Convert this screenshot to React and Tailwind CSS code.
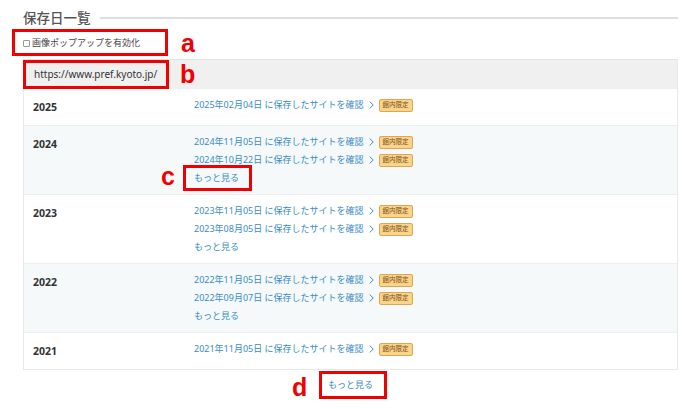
const jp = { fontFamily: '"Noto Sans", "Noto Sans CJK JP", sans-serif' };

const years = [
  { year: "2025", dates: ["2025年02月04日"], more: false },
  { year: "2024", dates: ["2024年11月05日", "2024年10月22日"], more: true },
  { year: "2023", dates: ["2023年11月05日", "2023年08月05日"], more: true },
  { year: "2022", dates: ["2022年11月05日", "2022年09月07日"], more: true },
  { year: "2021", dates: ["2021年11月05日"], more: false },
];

const Chevron = () => (
  <svg width="5" height="8" viewBox="0 0 5 8" className="mx-[5px] shrink-0">
    <path d="M0.8 0.6 L4.2 4 L0.8 7.4" fill="none" stroke="#3a8cc4" strokeWidth="1" />
  </svg>
);

const Badge = () => (
  <span className="inline-flex items-center h-[13px] px-[3px] rounded-[2px] border border-[#dea650] bg-[#fbd48c] text-[6.5px] leading-none text-[#7e5016]">
    館内限定
  </span>
);

// red annotation frame + letter lying over the page
const Mark = ({ box, letterPos, letter }) => (
  <>
    <div className={"absolute border-[3px] border-[#f00000] pointer-events-none " + box} />
    <span
      className={
        "absolute text-[25px] leading-[30px] font-bold text-[#f00000] font-['Liberation_Sans',sans-serif] " +
        letterPos
      }
    >
      {letter}
    </span>
  </>
);

export default function App() {
  return (
    <div className="relative w-[700px] h-[409px] bg-white overflow-hidden" style={jp}>
      <div className="pl-[23px] pr-[22px] pt-[8px]">
        <div className="flex items-center h-[20px]">
          <h2 className="text-[13.5px] font-medium text-[#555] leading-[20px]">保存日一覧</h2>
          <div className="flex-1 ml-[9px] h-[2px] bg-[#dedede]" />
        </div>

        <label className="flex items-center h-[14px] mt-[8px] text-[9px] text-[#444]">
          <span className="w-[7px] h-[7px] border border-[#999] rounded-[1px] mr-[2px]" />
          画像ポップアップを有効化
        </label>

        <div className="mt-[9px] border border-[#e8e8e8] border-t-0">
          <div className="h-[29px] flex items-center pl-[10px] bg-[#f0f0f0] border-t border-[#e4e4e4] text-[10px] text-[#333]">
            https://www.pref.kyoto.jp/
          </div>
          {years.map((y, i) => (
            <div
              key={y.year}
              className={
                "flex border-t border-[#eceff0] py-[7px] " +
                (i % 2 === 1 ? "bg-[#f5f9fa]" : "bg-white")
              }
            >
              <div className="w-[170px] shrink-0 pl-[9px] text-[10.5px] font-bold text-[#333] leading-[22px]">
                {y.year}
              </div>
              <div className="flex flex-col text-[9px] text-[#3a8cc4] leading-[18px]">
                {y.dates.map((d) => (
                  <div key={d} className="flex items-center h-[18px]">
                    <span>{d} に保存したサイトを確認</span>
                    <Chevron />
                    <Badge />
                  </div>
                ))}
                {y.more && <div className="h-[18px]">もっと見る</div>}
              </div>
            </div>
          ))}
        </div>

        <div className="flex justify-center mt-[6px] text-[9px] text-[#3a8cc4] leading-[18px]">
          もっと見る
        </div>
      </div>

      <Mark box="left-[12px] top-[29px] w-[156px] h-[27px]" letterPos="left-[181px] top-[28px]" letter="a" />
      <Mark box="left-[23px] top-[60px] w-[146px] h-[29px]" letterPos="left-[180px] top-[59px]" letter="b" />
      <Mark box="left-[183px] top-[165px] w-[69px] h-[26px]" letterPos="left-[161px] top-[161px]" letter="c" />
      <Mark box="left-[319px] top-[371px] w-[68px] h-[28px]" letterPos="left-[292px] top-[372px]" letter="d" />
    </div>
  );
}
